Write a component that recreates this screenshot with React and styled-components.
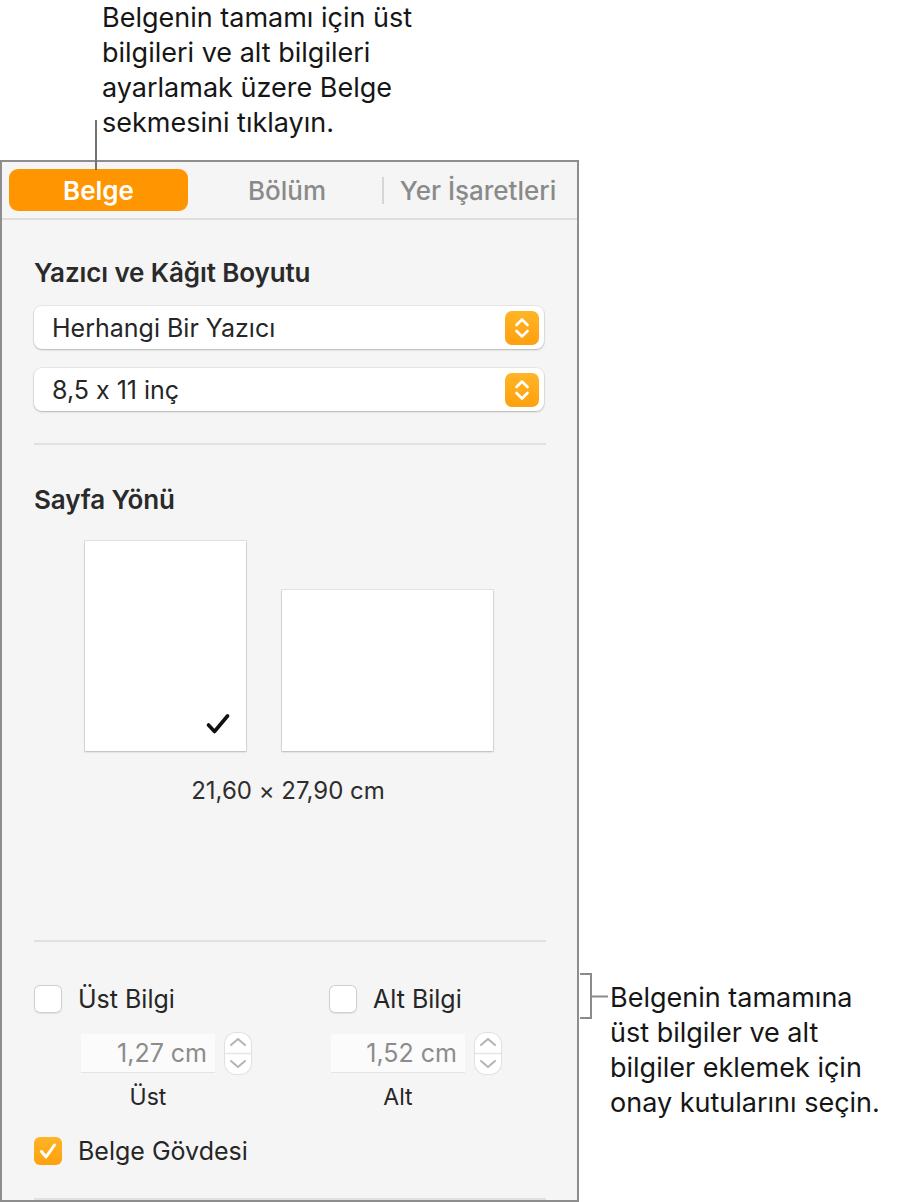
import React from "react";
import styled, { createGlobalStyle } from "styled-components";

const GlobalStyle = createGlobalStyle`
  html, body {
    margin: 0;
    padding: 0;
    background: #ffffff;
  }
  body {
    font-family: Inter, "Noto Sans", "Liberation Sans", sans-serif;
    font-feature-settings: "calt" 0;
    color: #1f1f1f;
    -webkit-font-smoothing: antialiased;
  }
`;

export default function App() {
  return (
    <Page>
      <GlobalStyle />
      <TopNote>
        <NoteText>
          Belgenin tamamı için üst
          <br />
          bilgileri ve alt bilgileri
          <br />
          ayarlamak üzere Belge
          <br />
          sekmesini tıklayın.
        </NoteText>
        <Leader />
      </TopNote>

      <Row>
        <Panel>
          <TabBar>
            <Tab $active>Belge</Tab>
            <Tab $shift={4}>Bölüm</Tab>
            <TabDivider />
            <Tab>Yer İşaretleri</Tab>
          </TabBar>

          <Body>
            <Heading $top={37}>Yazıcı ve Kâğıt Boyutu</Heading>
            <Popup $top={17}>
              <span>Herhangi Bir Yazıcı</span>
              <PopupArrows />
            </Popup>
            <Popup $top={19}>
              <span>8,5 x 11 inç</span>
              <PopupArrows />
            </Popup>

            <Divider $top={32} />

            <Heading $top={39}>Sayfa Yönü</Heading>
            <Pages>
              <Sheet $w={161} $h={210}>
                <svg width="24" height="22" viewBox="0 0 24 22">
                  <polyline
                    points="2.5,12 8.5,18.5 21.5,3"
                    fill="none"
                    stroke="#111"
                    strokeWidth="3.6"
                    strokeLinecap="round"
                    strokeLinejoin="round"
                  />
                </svg>
              </Sheet>
              <Sheet $w={211} $h={161} />
            </Pages>
            <Dimensions>21,60 × 27,90 cm</Dimensions>

            <Divider $top={134} />

            <HeaderFooter>
              <Column>
                <Check label="Üst Bilgi" />
                <FieldRow $indent={47}>
                  <Field>1,27 cm</Field>
                  <Stepper />
                </FieldRow>
                <Caption $indent={47}>Üst</Caption>
              </Column>
              <Column>
                <Check label="Alt Bilgi" />
                <FieldRow $indent={2}>
                  <Field>1,52 cm</Field>
                  <Stepper />
                </FieldRow>
                <Caption $indent={2}>Alt</Caption>
              </Column>
            </HeaderFooter>

            <BodyCheck>
              <Check label="Belge Gövdesi" checked />
            </BodyCheck>

            <Divider $top={33} />
          </Body>
        </Panel>

        <Aside>
          <svg width="30" height="47" viewBox="0 0 30 47">
            <path
              d="M0 1 H11 V45 H0 M11 23.5 H28"
              fill="none"
              stroke="#8a8a8a"
              strokeWidth="2"
            />
          </svg>
          <AsideText>
            Belgenin tamamına
            <br />
            üst bilgiler ve alt
            <br />
            bilgiler eklemek için
            <br />
            onay kutularını seçin.
          </AsideText>
        </Aside>
      </Row>
    </Page>
  );
}

function PopupArrows() {
  return (
    <OrangeStepper>
      <svg width="34" height="34" viewBox="0 0 34 34">
        <polyline points="11.5,14 17,8.5 22.5,14" fill="none" stroke="#fff" strokeWidth="2.6" strokeLinecap="round" strokeLinejoin="round" />
        <polyline points="11.5,20 17,25.5 22.5,20" fill="none" stroke="#fff" strokeWidth="2.6" strokeLinecap="round" strokeLinejoin="round" />
      </svg>
    </OrangeStepper>
  );
}

function Stepper() {
  return (
    <GrayStepper>
      <svg width="28" height="43" viewBox="0 0 28 43">
        <line x1="1" y1="21.5" x2="27" y2="21.5" stroke="#e6e6e6" strokeWidth="1.5" />
        <polyline points="7,13 14,7 21,13" fill="none" stroke="#b4b4b4" strokeWidth="2" strokeLinecap="round" strokeLinejoin="round" />
        <polyline points="7,29 14,35 21,29" fill="none" stroke="#b4b4b4" strokeWidth="2" strokeLinecap="round" strokeLinejoin="round" />
      </svg>
    </GrayStepper>
  );
}

function Check({ label, checked }) {
  return (
    <CheckRow>
      <Box $checked={checked}>
        {checked && (
          <svg width="28" height="28" viewBox="0 0 28 28">
            <polyline points="7.5,14.5 12,20 20.5,8" fill="none" stroke="#fff" strokeWidth="3" strokeLinecap="round" strokeLinejoin="round" />
          </svg>
        )}
      </Box>
      <CheckLabel>{label}</CheckLabel>
    </CheckRow>
  );
}

const Page = styled.div`
  width: 897px;
  height: 1202px;
  overflow: hidden;
`;

const TopNote = styled.div`
  position: relative;
  height: 160px;
  padding-left: 102px;
  box-sizing: border-box;
`;

const NoteText = styled.div`
  font-size: 27px;
  line-height: 35px;
  color: #161616;
`;

const Leader = styled.div`
  position: absolute;
  left: 95px;
  top: 120px;
  width: 2px;
  height: 50px;
  background: #727272;
  z-index: 2;
`;

const Row = styled.div`
  display: flex;
  align-items: flex-start;
`;

const Panel = styled.div`
  width: 579px;
  flex: none;
  box-sizing: border-box;
  border: 2px solid #8d8d8d;
  background: #f5f5f5;
`;

const TabBar = styled.div`
  display: flex;
  align-items: center;
  padding: 7px 4px 7px 7px;
  height: 42px;
  border-bottom: 2px solid #dedede;
`;

const Tab = styled.div`
  height: 42px;
  display: flex;
  align-items: center;
  justify-content: center;
  box-sizing: border-box;
  font-size: 26px;
  border-radius: 9px;
  white-space: nowrap;
  ${({ $active, $shift }) =>
    $active
      ? `
    width: 179px;
    background: #ff9500;
    color: #ffffff;
    font-weight: 600;
  `
      : `
    width: ${$shift ? 194 : 188}px;
    padding-left: ${$shift || 0}px;
    color: #8a8a8a;
    font-weight: 500;
  `}
`;

const TabDivider = styled.div`
  width: 2px;
  height: 27px;
  background: #d6d6d6;
`;

const Body = styled.div`
  padding: 0 31px 0 32px;
`;

const Heading = styled.div`
  margin-top: ${({ $top }) => $top}px;
  font-size: 26px;
  line-height: 32px;
  font-weight: 600;
  letter-spacing: -0.1px;
  color: #2a2a2a;
`;

const Popup = styled.div`
  margin-top: ${({ $top }) => $top}px;
  height: 43px;
  width: 510px;
  box-sizing: border-box;
  display: flex;
  align-items: center;
  justify-content: space-between;
  padding: 0 5px 0 18px;
  background: #ffffff;
  border-radius: 8px;
  box-shadow: 0 0 0 1px rgba(0, 0, 0, 0.05), 0 1px 2px rgba(0, 0, 0, 0.22);
  font-size: 25px;
  color: #262626;
`;

const OrangeStepper = styled.div`
  width: 34px;
  height: 34px;
  border-radius: 7px;
  background: linear-gradient(#ffb526, #ffa00f);
  display: flex;
`;

const Divider = styled.div`
  margin-top: ${({ $top }) => $top}px;
  height: 2px;
  background: #e1e1e1;
`;

const Pages = styled.div`
  margin-top: 25px;
  display: flex;
  align-items: flex-end;
  justify-content: center;
  gap: 36px;
  height: 210px;
  padding-right: 2px;
`;

const Sheet = styled.div`
  width: ${({ $w }) => $w}px;
  height: ${({ $h }) => $h}px;
  box-sizing: border-box;
  background: #ffffff;
  box-shadow: 0 0 0 1px rgba(0, 0, 0, 0.07), 0 1px 2px rgba(0, 0, 0, 0.2);
  display: flex;
  align-items: flex-end;
  justify-content: flex-end;
  padding: 0 16px 16px 0;
`;

const Dimensions = styled.div`
  margin-top: 25px;
  text-align: center;
  font-size: 24px;
  line-height: 30px;
  color: #2e2e2e;
  padding-right: 4px;
`;

const HeaderFooter = styled.div`
  margin-top: 43px;
  display: grid;
  grid-template-columns: 295px 1fr;
`;

const Column = styled.div`
  display: flex;
  flex-direction: column;
`;

const CheckRow = styled.div`
  display: flex;
  align-items: center;
  gap: 16px;
  height: 28px;
`;

const Box = styled.div`
  width: 28px;
  height: 28px;
  box-sizing: border-box;
  border-radius: 6px;
  display: flex;
  ${({ $checked }) =>
    $checked
      ? `
    background: linear-gradient(#ffb526, #ffa00f);
  `
      : `
    background: #ffffff;
    box-shadow: inset 0 0 0 1px #cfcfcf, 0 0.5px 1px rgba(0,0,0,0.08);
  `}
`;

const CheckLabel = styled.span`
  font-size: 25px;
  color: #262626;
  white-space: nowrap;
`;

const FieldRow = styled.div`
  margin-top: 19px;
  margin-left: ${({ $indent }) => $indent}px;
  display: flex;
  align-items: center;
  gap: 9px;
  height: 43px;
`;

const Field = styled.div`
  width: 134px;
  height: 39px;
  box-sizing: border-box;
  background: #fbfbfb;
  border-bottom: 1px solid #e4e4e4;
  display: flex;
  align-items: center;
  justify-content: flex-end;
  padding-right: 8px;
  font-size: 25px;
  color: #8c8c8c;
`;

const GrayStepper = styled.div`
  width: 28px;
  height: 43px;
  box-sizing: border-box;
  border-radius: 12px;
  background: #ffffff;
  box-shadow: inset 0 0 0 1px #e0e0e0;
  display: flex;
  overflow: hidden;
`;

const Caption = styled.div`
  margin-top: 7px;
  margin-left: ${({ $indent }) => $indent}px;
  width: 134px;
  text-align: center;
  font-size: 23px;
  line-height: 30px;
  color: #262626;
`;

const BodyCheck = styled.div`
  margin-top: 25px;
`;

const Aside = styled.div`
  margin-top: 813px;
  margin-left: 1px;
  display: flex;
  align-items: flex-start;
`;

const AsideText = styled.div`
  margin-top: 7px;
  font-size: 27px;
  line-height: 35px;
  color: #161616;
  white-space: nowrap;
`;
